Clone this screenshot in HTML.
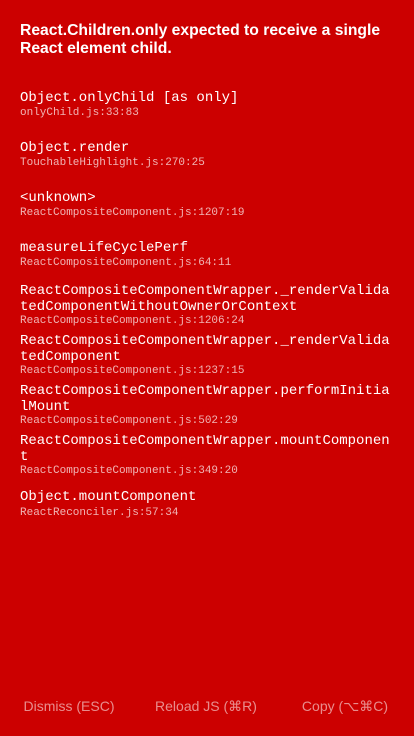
<!DOCTYPE html>
<html><head><meta charset="utf-8"><style>
html,body{margin:0;padding:0;width:414px;height:736px;background:#cc0000;overflow:hidden}
body{position:relative;font-family:"Liberation Sans",sans-serif;color:#fff}
.t{position:absolute;left:20px;top:22px;font-weight:bold;font-size:15.7px;line-height:18px;white-space:nowrap}
.m{position:absolute;left:20px;font-family:"Liberation Mono",monospace;font-size:14px;line-height:16px;white-space:pre;color:#fff}
.f{position:absolute;left:20px;font-family:"Liberation Mono",monospace;font-size:11px;line-height:12px;white-space:pre;color:rgba(255,255,255,0.7)}
.b{position:absolute;top:697px;font-size:14px;line-height:18px;color:rgba(255,255,255,0.55);white-space:nowrap;transform:translateX(-50%)}
</style></head><body>
<div class="t">React.Children.only expected to receive a single<br>React element child.</div>
<div class="m" style="top:90px">Object.onlyChild [as only]</div>
<div class="f" style="top:107px">onlyChild.js:33:83</div>
<div class="m" style="top:140px">Object.render</div>
<div class="f" style="top:157px">TouchableHighlight.js:270:25</div>
<div class="m" style="top:190px">&lt;unknown&gt;</div>
<div class="f" style="top:207px">ReactCompositeComponent.js:1207:19</div>
<div class="m" style="top:240px">measureLifeCyclePerf</div>
<div class="f" style="top:257px">ReactCompositeComponent.js:64:11</div>
<div class="m" style="top:283px">ReactCompositeComponentWrapper._renderValida
tedComponentWithoutOwnerOrContext</div>
<div class="f" style="top:315px">ReactCompositeComponent.js:1206:24</div>
<div class="m" style="top:333px">ReactCompositeComponentWrapper._renderValida
tedComponent</div>
<div class="f" style="top:365px">ReactCompositeComponent.js:1237:15</div>
<div class="m" style="top:383px">ReactCompositeComponentWrapper.performInitia
lMount</div>
<div class="f" style="top:415px">ReactCompositeComponent.js:502:29</div>
<div class="m" style="top:433px">ReactCompositeComponentWrapper.mountComponen
t</div>
<div class="f" style="top:465px">ReactCompositeComponent.js:349:20</div>
<div class="m" style="top:489px">Object.mountComponent</div>
<div class="f" style="top:507px">ReactReconciler.js:57:34</div>
<div class="b" style="left:69px">Dismiss (ESC)</div>
<div class="b" style="left:206px">Reload JS (⌘R)</div>
<div class="b" style="left:345px">Copy (⌥⌘C)</div>
</body></html>
